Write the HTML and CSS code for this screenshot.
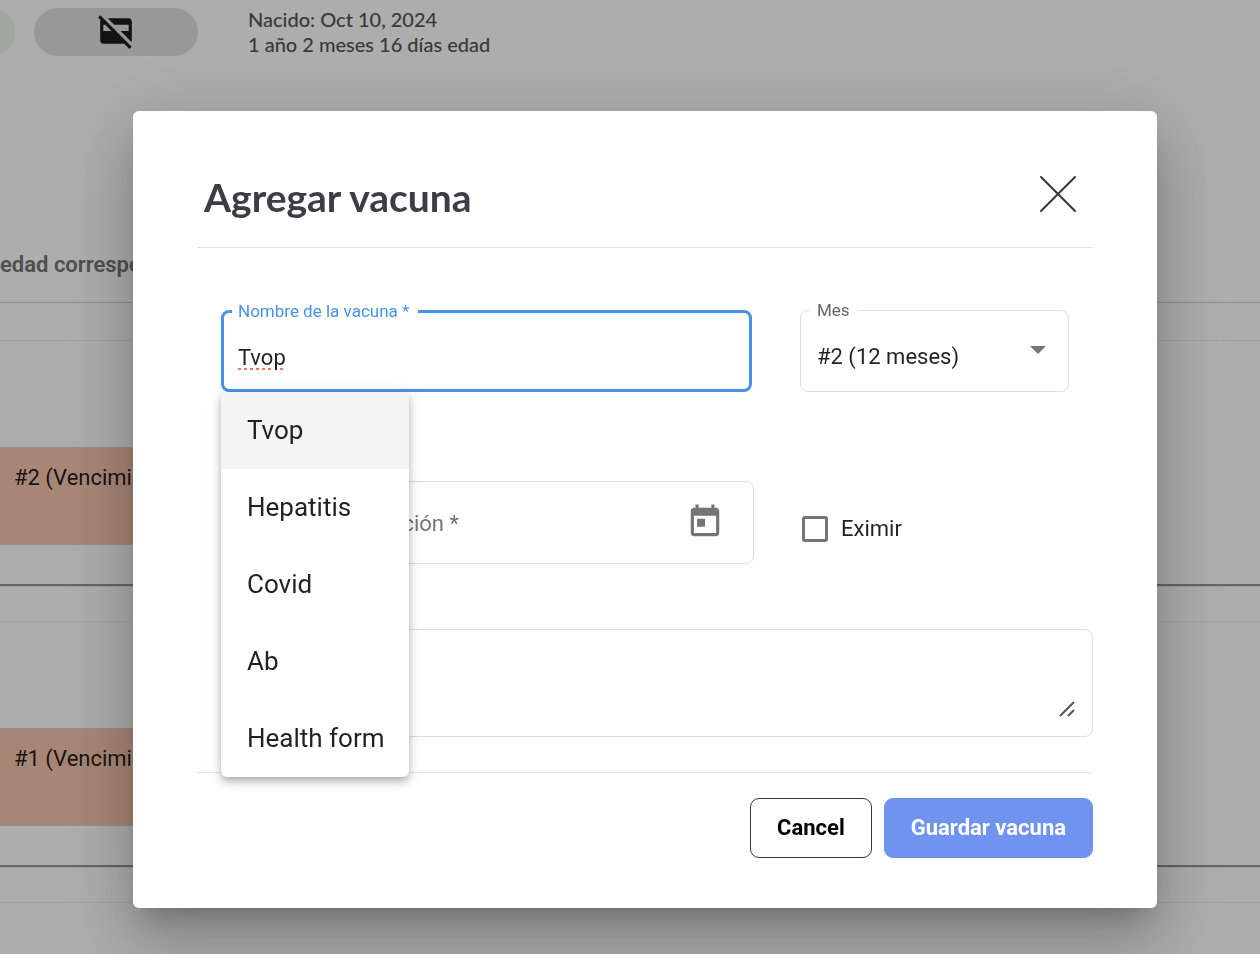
FILE: index.html
```
<!DOCTYPE html>
<html lang="es">
<head>
<meta charset="utf-8">
<meta name="viewport" content="width=device-width, initial-scale=1">
<title>Agregar vacuna</title>
<link rel="stylesheet" href="styles.css">
</head>
<body>
<main class="page">
  <header class="profile">
    <span class="chip chip-ok"></span>
    <span class="chip chip-card">
      <svg class="icon" viewBox="0 0 24 24" aria-hidden="true"><path fill-rule="evenodd" d="M6.83 4H20c1.11 0 2 .89 2 2v12c0 .34-.08.66-.23.94L14.83 12H20V8h-9.17zM20.49 23.31L17.17 20H4c-1.11 0-2-.89-2-2V6c0-.34.08-.66.23-.93L.69 3.51 2.1 2.1l19.8 19.8zM4 8v4h5.17l-4-4z"/></svg>
    </span>
    <p class="birth">Nacido: Oct 10, 2024<br>1 año 2 meses 16 días edad</p>
  </header>
  <section class="records">
    <h2 class="records-head">edad correspondiente</h2>
    <div class="record"><div class="record-cell"><p class="due">#2 (Vencimiento)</p></div></div>
    <div class="record"><div class="record-cell"><p class="due">#1 (Vencimiento)</p></div></div>
    <div class="record"><div class="record-cell"></div></div>
  </section>
</main>

<div class="overlay">
  <form class="dialog" role="dialog" aria-labelledby="dialog-title">
    <header class="dialog-head">
      <h1 class="dialog-title" id="dialog-title">Agregar vacuna</h1>
      <button class="close" type="button" aria-label="Cerrar">
        <svg class="close-icon" viewBox="0 0 38 38" aria-hidden="true"><path d="M2 2l34 34M36 2L2 36"/></svg>
      </button>
    </header>
    <div class="dialog-body">
      <div class="row row-name">
        <div class="combo">
          <fieldset class="field field-active">
            <legend class="legend"><label for="name">Nombre de la vacuna *</label></legend>
            <input class="control control-flagged" id="name" type="text" value="Tvop" spellcheck="false" autocomplete="off">
          </fieldset>
          <ul class="menu" role="listbox">
            <li class="option option-active" role="option" aria-selected="true">Tvop</li>
            <li class="option" role="option">Hepatitis</li>
            <li class="option" role="option">Covid</li>
            <li class="option" role="option">Ab</li>
            <li class="option" role="option">Health form</li>
          </ul>
        </div>
        <fieldset class="field">
          <legend class="legend"><label for="month">Mes</label></legend>
          <select class="control control-select" id="month"><option>#2 (12 meses)</option></select>
          <svg class="arrow" viewBox="0 0 16 8" aria-hidden="true"><path d="M0 0h16L8 8z"/></svg>
        </fieldset>
      </div>
      <div class="row row-date">
        <div class="field field-date">
          <input class="control" type="text" placeholder="Fecha de vacunación *" aria-label="Fecha de vacunación">
          <button class="calendar" type="button" aria-label="Abrir calendario">
            <svg class="icon" viewBox="0 0 24 24" aria-hidden="true"><path d="M19 3h-1V1h-2v2H8V1H6v2H5c-1.11 0-1.99.9-1.99 2L3 19c0 1.1.89 2 2 2h14c1.1 0 2-.9 2-2V5c0-1.1-.9-2-2-2zm0 16H5V8h14v11zM7 10h5v5H7z"/></svg>
          </button>
        </div>
        <label class="check"><input class="check-box" type="checkbox">Eximir</label>
      </div>
      <div class="notes">
        <textarea class="notes-text" aria-label="Notas"></textarea>
        <svg class="grip" viewBox="0 0 16 16" aria-hidden="true"><path d="M1 15L15 1M9 15l6-6"/></svg>
      </div>
    </div>
    <footer class="dialog-foot">
      <button class="button" type="button">Cancel</button>
      <button class="button button-primary" type="submit">Guardar vacuna</button>
    </footer>
  </form>
</div>
</body>
</html>
```
FILE: styles.css
```
* { box-sizing: border-box; }

body {
  margin: 0;
  height: 100vh;
  overflow: hidden;
  background: #fff;
  color: rgba(0, 0, 0, 0.87);
  font: 22px/28px Roboto, "Liberation Sans", sans-serif;
}

h1, h2, p, ul { margin: 0; padding: 0; }
button, input, select, textarea { font: inherit; color: inherit; }

.page { height: 100%; overflow: hidden; }

.profile {
  display: flex;
  align-items: flex-start;
  padding-top: 7px;
  height: 226px;
}
.chip {
  display: flex;
  align-items: center;
  justify-content: center;
  height: 48px;
  margin-top: 1px;
  border-radius: 24px;
}
.chip-ok {
  width: 64px;
  margin-left: -49px;
  background: #ebf6ea;
}
.chip-card {
  width: 164px;
  margin-left: 19px;
  padding-bottom: 2px;
  background: #e1e1e1;
}
.icon {
  display: block;
  width: 38px;
  height: 38px;
  fill: currentColor;
}
.birth {
  margin-left: 50px;
  color: #555;
  font: 500 20px/25px Lato, sans-serif;
}

.records-head {
  height: 77px;
  padding-top: 25px;
  border-bottom: 1px solid #d2d2d2;
  color: #757575;
  font-size: 22px;
  font-weight: 600;
  line-height: 28px;
}
.record {
  height: 281px;
  padding: 37px 0 39px;
  box-shadow: 0 2px 1px #969696;
  clip-path: inset(0 0 -4px 0);
}
.record-cell {
  border-top: 1px solid #f0f0f0;
  padding-top: 106px;
}
.due {
  width: 50%;
  height: 98px;
  padding: 16px 14px;
  border: 1px solid #dcd2cc;
  border-width: 1px 0;
  background: #f7c6af;
}

.overlay {
  position: fixed;
  inset: 0;
  display: flex;
  align-items: center;
  justify-content: center;
  padding: 65px 0 0 30px;
  background: rgba(0, 0, 0, 0.32);
}
.dialog {
  width: 100%;
  max-width: 1024px;
  padding: 64px 64px 50px;
  border-radius: 6px;
  background: #fff;
  box-shadow: 0 18px 24px -11px rgba(0, 0, 0, 0.2),
    0 38px 61px 5px rgba(0, 0, 0, 0.14),
    0 14px 74px 13px rgba(0, 0, 0, 0.12);
}
.dialog-head {
  display: flex;
  align-items: flex-start;
  justify-content: space-between;
  height: 73px;
  padding: 0 16px 0 7px;
  border-bottom: 1px solid #e4e4e4;
}
.dialog-title {
  color: #3d3d45;
  font: bold 39px/44px Lato, sans-serif;
}
.close {
  padding: 0;
  border: 0;
  background: none;
}
.close-icon {
  display: block;
  width: 38px;
  height: 38px;
  fill: none;
  stroke: #36363d;
  stroke-width: 2;
  stroke-linecap: round;
}

.dialog-body {
  padding: 62px 0 35px 24px;
  border-bottom: 1px solid #e4e4e4;
}
.row { display: grid; gap: 48px; }
.row-name {
  grid-template-columns: 1fr 269px;
  padding-right: 24px;
}
.row-date {
  grid-template-columns: 1fr 291px;
  margin-top: 89px;
}
.combo { position: relative; min-width: 0; }

.field {
  position: relative;
  min-width: 0;
  height: 82px;
  margin: 0;
  padding: 0 16px 0 8px;
  border: 1px solid #dedede;
  border-radius: 8px;
}
.field-active { border: 3px solid #4893ea; }
.legend {
  padding: 0 8px;
  color: #666;
  font-size: 17px;
  line-height: 1px;
}
.field-active .legend {
  padding: 0 9px 0 6px;
  color: #4893ea;
  line-height: 3px;
}
.control {
  display: block;
  width: 100%;
  height: 60px;
  margin: 0;
  padding: 0;
  border: 0;
  outline: 0;
  background: none;
}
.field-active .control {
  margin-top: 14px;
  padding-left: 6px;
}
.control-flagged {
  text-decoration: underline dotted #f07468 3px;
  text-underline-offset: 3px;
}
.control-select {
  margin-top: 16px;
  padding-left: 8px;
  appearance: none;
}
.arrow {
  position: absolute;
  top: 35px;
  right: 22px;
  width: 16px;
  height: 8px;
  fill: #757575;
  pointer-events: none;
}

.menu {
  position: absolute;
  top: 82px;
  left: 0;
  z-index: 1;
  overflow: hidden;
  list-style: none;
  border-radius: 0 0 6px 6px;
  background: #fff;
  box-shadow: 0 3px 6px -2px rgba(0, 0, 0, 0.2),
    0 6px 8px rgba(0, 0, 0, 0.14),
    0 2px 16px rgba(0, 0, 0, 0.12);
}
.option {
  padding: 0 24px 0 26px;
  font-size: 26px;
  line-height: 77px;
  white-space: nowrap;
}
.option-active { background: #f4f4f4; }

.field-date {
  display: flex;
  align-items: center;
  height: 83px;
  padding: 0 29px 0 16px;
}
.field-date .control { padding-top: 2px; }
.field-date .control::placeholder { color: #757575; opacity: 1; }
.calendar {
  flex: none;
  padding: 0 0 2px;
  border: 0;
  background: none;
  color: #757575;
}
.check {
  display: flex;
  align-items: center;
  gap: 13px;
  padding-top: 12px;
}
.check-box {
  width: 26px;
  height: 26px;
  margin: 0;
  border: 3px solid #757575;
  border-radius: 3px;
  appearance: none;
}

.notes { position: relative; margin-top: 65px; }
.notes-text {
  display: block;
  width: 100%;
  height: 108px;
  padding: 16px;
  border: 1px solid #dedede;
  border-radius: 8px;
  outline: 0;
  resize: none;
}
.grip {
  position: absolute;
  right: 18px;
  bottom: 20px;
  width: 16px;
  height: 16px;
  fill: none;
  stroke: #555;
  stroke-width: 2;
}

.dialog-foot {
  display: flex;
  justify-content: flex-end;
  gap: 12px;
  padding-top: 25px;
}
.button {
  height: 60px;
  padding: 0 26px;
  border: 1px solid #36363d;
  border-radius: 9px;
  background: #fff;
  color: #000;
  font-weight: 700;
}
.button-primary {
  border-color: #6f93ef;
  background: #6f93ef;
  color: #fff;
}
```
